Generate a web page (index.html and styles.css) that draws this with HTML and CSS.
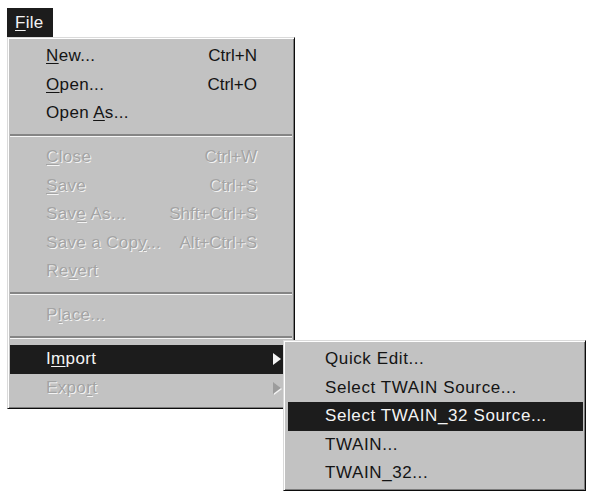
FILE: index.html
```html
<!DOCTYPE html>
<html lang="en">
<head>
<meta charset="utf-8">
<title>File menu</title>
<link rel="stylesheet" href="styles.css">
</head>
<body>
<div class="screen">
  <div class="menubar">
    <span class="menu-title open"><u>F</u>ile</span>
  </div>

  <div class="menu main-menu">
    <div class="item"><span class="label"><u>N</u>ew...</span><span class="key">Ctrl+N</span></div>
    <div class="item"><span class="label"><u>O</u>pen...</span><span class="key">Ctrl+O</span></div>
    <div class="item"><span class="label">Open <u>A</u>s...</span></div>
    <div class="sep"></div>
    <div class="item disabled"><span class="label"><u>C</u>lose</span><span class="key">Ctrl+W</span></div>
    <div class="item disabled"><span class="label"><u>S</u>ave</span><span class="key">Ctrl+S</span></div>
    <div class="item disabled"><span class="label">Sav<u>e</u> As...</span><span class="key">Shft+Ctrl+S</span></div>
    <div class="item disabled"><span class="label">Save a Cop<u>y</u>...</span><span class="key">Alt+Ctrl+S</span></div>
    <div class="item disabled"><span class="label">Re<u>v</u>ert</span></div>
    <div class="sep"></div>
    <div class="item disabled"><span class="label">P<u>l</u>ace...</span></div>
    <div class="sep"></div>
    <div class="item has-sub active">
      <span class="label">I<u>m</u>port</span><span class="arrow"></span>
      <div class="menu submenu">
        <div class="item"><span class="label">Quick Edit...</span></div>
        <div class="item"><span class="label">Select TWAIN Source...</span></div>
        <div class="item active"><span class="label">Select TWAIN_32 Source...</span></div>
        <div class="item"><span class="label">TWAIN...</span></div>
        <div class="item"><span class="label">TWAIN_32...</span></div>
      </div>
    </div>
    <div class="item has-sub disabled"><span class="label">Expo<u>r</u>t</span><span class="arrow"></span></div>
  </div>
</div>
</body>
</html>
```

FILE: styles.css
```css
html, body {
  margin: 0;
  padding: 0;
  background: #ffffff;
}

body {
  font-family: "Liberation Sans", Arial, sans-serif;
  font-size: 17px;
  color: #141414;
}

u {
  text-decoration-thickness: 1px;
  text-underline-offset: 2px;
}

.screen {
  padding: 8px 0 0 7px;
  width: 583px;
  height: 488px;
}

/* menu bar with the open "File" title */
.menubar {
  display: flex;
  height: 29px;
}

.menu-title {
  display: block;
  height: 29px;
  line-height: 29px;
  padding: 0 9px 0 8px;
  letter-spacing: 0.3px;
}

.menu-title.open {
  background: #1c1c1c;
  color: #f4f4f4;
}

/* drop-down panels: raised 3D frame */
.menu {
  box-sizing: border-box;
  background: #c2c2c2;
  border: 1px solid;
  border-color: #dadada #0c0c0c #0c0c0c #dadada;
  box-shadow: inset 1px 1px 0 #ffffff, inset -1px -1px 0 #7c7c7c;
}

.main-menu {
  width: 288px;
  padding: 4px 2px 6px 2px;
}

.item {
  position: relative;
  display: flex;
  justify-content: space-between;
  height: 28.5px;
  line-height: 28.5px;
  padding: 0 35px 0 36px;
  white-space: nowrap;
}

.label {
  letter-spacing: 0.35px;
}

.item.active {
  background: #1c1c1c;
  color: #f4f4f4;
}

.item.disabled {
  color: #a4a4a4;
  text-shadow: 1px 1px 0 #f4f4f4;
}

.key {
  text-align: right;
}

/* separator: etched line */
.sep {
  display: flex;
  align-items: center;
  height: 15.5px;
}

.sep::after {
  content: "";
  flex: 1;
  border-top: 2px solid #858585;
  border-bottom: 1px solid #f6f6f6;
}

/* sub-menu arrow */
.arrow {
  position: absolute;
  right: 11px;
  top: 8px;
  width: 0;
  height: 0;
  border-left: 8px solid #141414;
  border-top: 6.5px solid transparent;
  border-bottom: 6.5px solid transparent;
}

.item.active > .arrow {
  border-left-color: #f4f4f4;
}

.item.disabled > .arrow {
  border-left-color: #9c9c9c;
  filter: drop-shadow(1px 1px 0 #f4f4f4);
}

/* cascading sub-menu opened from "Import" */
.submenu {
  position: absolute;
  left: 273px;
  top: -5px;
  width: 303px;
  padding: 4px 2px 2px 4px;
  color: #141414;
  z-index: 2;
}

.submenu .item {
  padding: 0 20px 0 37px;
}

.submenu .label {
  letter-spacing: 0.6px;
}
```
